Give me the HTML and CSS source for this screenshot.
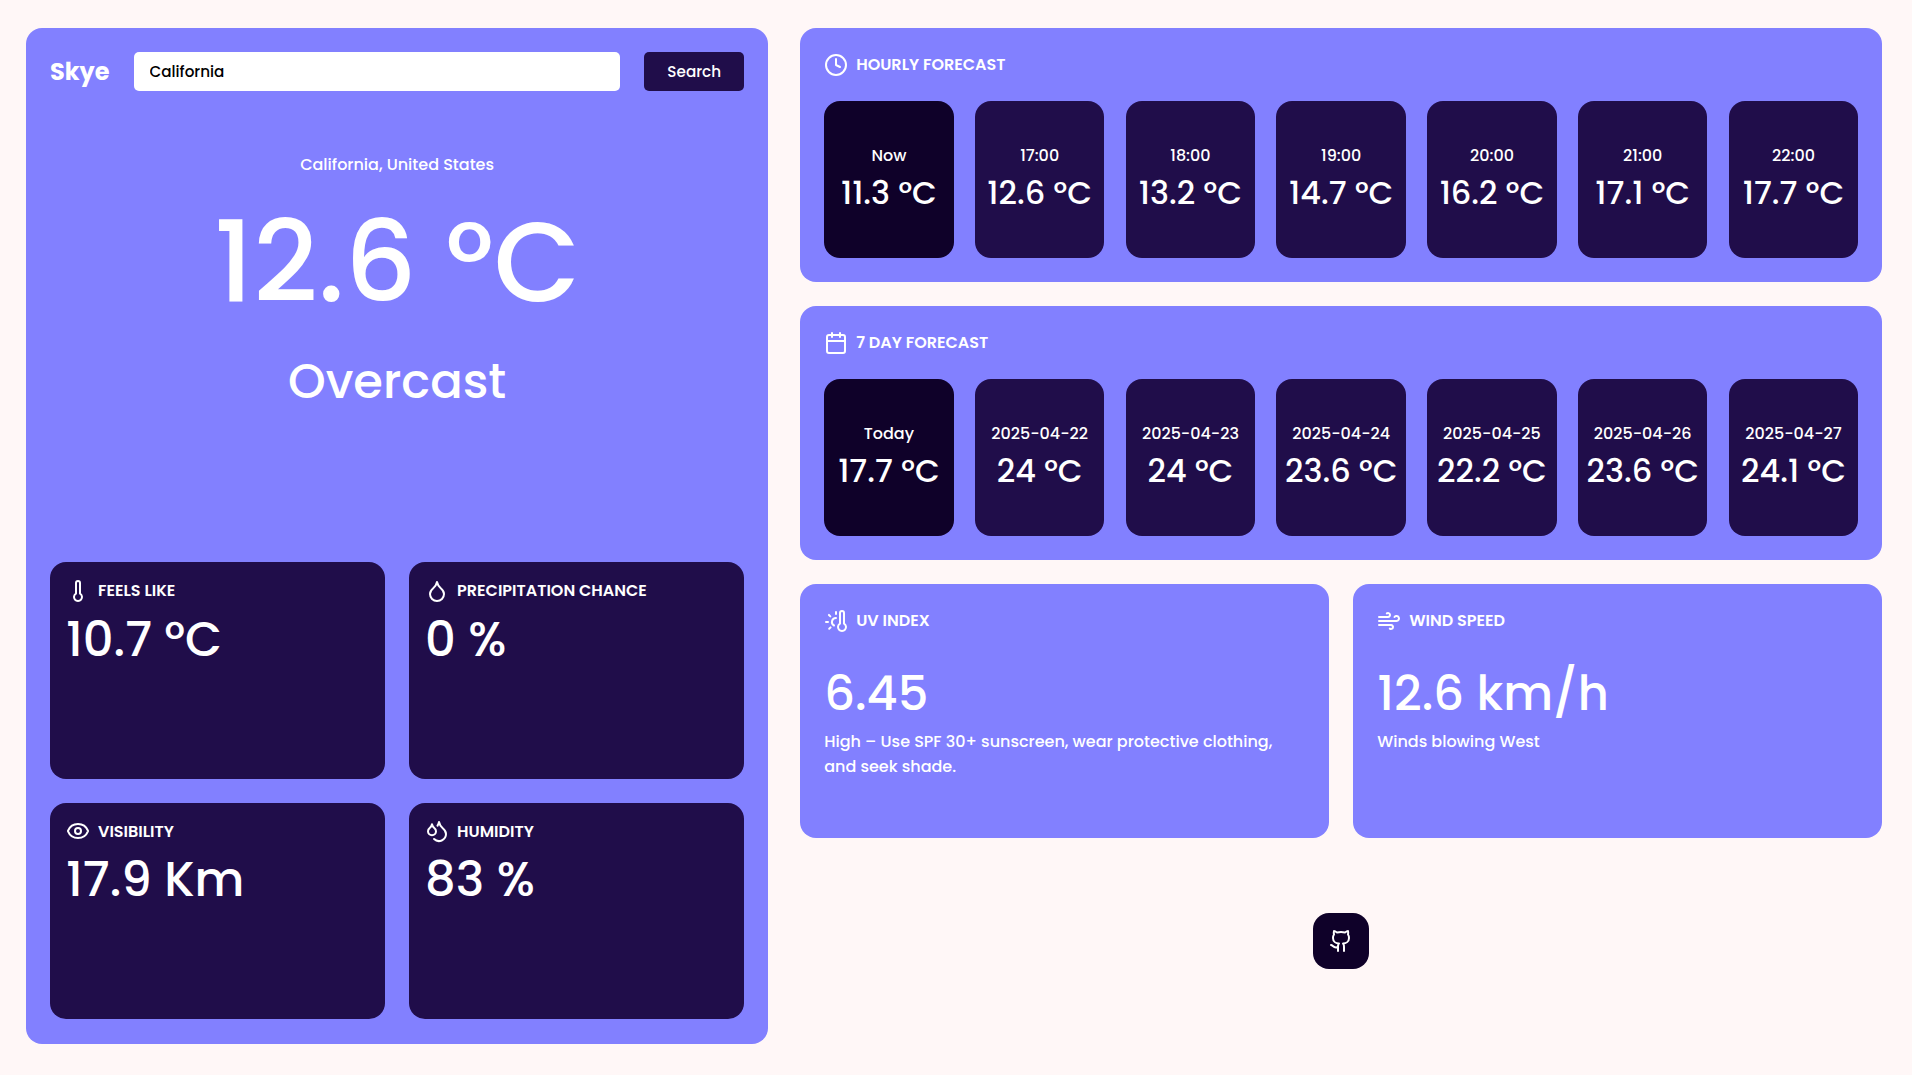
FILE: index.html
```
<!DOCTYPE html>
<html lang="en">
<head>
<meta charset="utf-8">
<title>Skye</title>
<link rel="stylesheet" href="styles.css">
</head>
<body>
<main class="app">
  <section class="current">
    <form class="search">
      <h1 class="brand">Skye</h1>
      <input class="search-input" type="text" value="California" aria-label="Location">
      <button class="search-button" type="button">Search</button>
    </form>
    <div class="summary">
      <p class="place">California, United States</p>
      <p class="now-temp">12.6 °C</p>
      <p class="condition">Overcast</p>
    </div>
    <div class="tiles">
      <article class="tile">
        <h2 class="label"><svg class="icon" viewBox="0 0 24 24"><path d="M14 4v10.54a4 4 0 1 1-4 0V4a2 2 0 0 1 4 0Z"/></svg>FEELS LIKE</h2>
        <p class="value">10.7 °C</p>
      </article>
      <article class="tile">
        <h2 class="label"><svg class="icon" viewBox="0 0 24 24"><path d="M12 22a7 7 0 0 0 7-7c0-2-1-3.9-3-5.5s-3.5-4-4-6.5c-.5 2.5-2 4.9-4 6.5C6 11.1 5 13 5 15a7 7 0 0 0 7 7z"/></svg>PRECIPITATION CHANCE</h2>
        <p class="value">0 %</p>
      </article>
      <article class="tile">
        <h2 class="label"><svg class="icon" viewBox="0 0 24 24"><path d="M2.062 12.348a1 1 0 0 1 0-.696 10.75 10.75 0 0 1 19.876 0 1 1 0 0 1 0 .696 10.75 10.75 0 0 1-19.876 0"/><circle cx="12" cy="12" r="3"/></svg>VISIBILITY</h2>
        <p class="value">17.9 Km</p>
      </article>
      <article class="tile">
        <h2 class="label"><svg class="icon" viewBox="0 0 24 24"><path d="M7 16.3c2.2 0 4-1.83 4-4.05 0-1.16-.57-2.26-1.71-3.19S7.29 6.75 7 5.3c-.29 1.45-1.14 2.84-2.29 3.76S3 11.1 3 12.25c0 2.22 1.8 4.05 4 4.05z"/><path d="M12.56 6.6A10.97 10.97 0 0 0 14 3.02c.5 2.5 2 4.9 4 6.5s3 3.5 3 5.5a6.98 6.98 0 0 1-11.91 4.97"/></svg>HUMIDITY</h2>
        <p class="value">83 %</p>
      </article>
    </div>
  </section>

  <div class="details">
    <section class="panel">
      <h2 class="label"><svg class="icon" viewBox="0 0 24 24"><circle cx="12" cy="12" r="10"/><path d="M12 6v6l4 2"/></svg>HOURLY FORECAST</h2>
      <ul class="forecast">
        <li class="slot active"><span>Now</span><strong>11.3 °C</strong></li>
        <li class="slot"><span>17:00</span><strong>12.6 °C</strong></li>
        <li class="slot"><span>18:00</span><strong>13.2 °C</strong></li>
        <li class="slot"><span>19:00</span><strong>14.7 °C</strong></li>
        <li class="slot"><span>20:00</span><strong>16.2 °C</strong></li>
        <li class="slot"><span>21:00</span><strong>17.1 °C</strong></li>
        <li class="slot"><span>22:00</span><strong>17.7 °C</strong></li>
      </ul>
    </section>
    <section class="panel">
      <h2 class="label"><svg class="icon" viewBox="0 0 24 24"><path d="M8 2v4M16 2v4M3 10h18"/><rect x="3" y="4" width="18" height="18" rx="2"/></svg>7 DAY FORECAST</h2>
      <ul class="forecast">
        <li class="slot active"><span>Today</span><strong>17.7 °C</strong></li>
        <li class="slot"><span>2025-04-22</span><strong>24 °C</strong></li>
        <li class="slot"><span>2025-04-23</span><strong>24 °C</strong></li>
        <li class="slot"><span>2025-04-24</span><strong>23.6 °C</strong></li>
        <li class="slot"><span>2025-04-25</span><strong>22.2 °C</strong></li>
        <li class="slot"><span>2025-04-26</span><strong>23.6 °C</strong></li>
        <li class="slot"><span>2025-04-27</span><strong>24.1 °C</strong></li>
      </ul>
    </section>
    <div class="pair">
      <section class="panel">
        <h2 class="label"><svg class="icon" viewBox="0 0 24 24"><path d="M12 9a4 4 0 0 0-2 7.5M12 3v2M6.6 18.4l-1.4 1.4M20 4v10.54a4 4 0 1 1-4 0V4a2 2 0 0 1 4 0ZM4 13H2M6.34 7.34 4.93 5.93"/></svg>UV INDEX</h2>
        <div class="reading">
          <p class="value">6.45</p>
          <p class="note">High – Use SPF 30+ sunscreen, wear protective clothing, and seek shade.</p>
        </div>
      </section>
      <section class="panel">
        <h2 class="label"><svg class="icon" viewBox="0 0 24 24"><path d="M12.8 19.6A2 2 0 1 0 14 16H2M17.5 8a2.5 2.5 0 1 1 2 4H2M9.8 4.4A2 2 0 1 1 11 8H2"/></svg>WIND SPEED</h2>
        <div class="reading">
          <p class="value">12.6 km/h</p>
          <p class="note">Winds blowing West</p>
        </div>
      </section>
    </div>
    <footer class="footer">
      <a class="github" href="#" aria-label="GitHub"><svg class="icon" viewBox="0 0 24 24"><path d="M15 22v-4a4.8 4.8 0 0 0-1-3.5c3 0 6-2 6-5.5.08-1.25-.27-2.48-1-3.5.28-1.15.28-2.35 0-3.5 0 0-1 0-3 1.5-2.64-.5-5.36-.5-8 0C6 2 5 2 5 2c-.3 1.15-.3 2.35 0 3.5A5.403 5.403 0 0 0 4 9c0 3.5 3 5.5 6 5.5-.39.49-.68 1.05-.85 1.65-.17.6-.22 1.23-.15 1.85v4"/><path d="M9 18c-4.51 2-5-2-7-2"/></svg></a>
    </footer>
  </div>
</main>
</body>
</html>
```
FILE: styles.css
```
* { box-sizing: border-box; margin: 0; padding: 0; }

:root {
  --bg: #fff7f7;
  --panel: #8280ff;
  --card: #200d4a;
  --card-active: #0f0129;
}

body {
  background: var(--bg);
  color: #fff;
  font: 500 16px/1.6 Poppins, Inter, sans-serif;
}

.app {
  display: grid;
  grid-template-columns: 742.2px 1fr;
  gap: 32px;
  height: 1075px;
  padding: 28px 29.8px 31px 26px;
}

.current {
  display: flex;
  flex-direction: column;
  padding: 24px 24px 25px;
  border-radius: 16px;
  background: var(--panel);
}

.search { display: flex; align-items: center; gap: 24px; height: 39px; }
.brand { font-size: 24px; font-weight: 700; line-height: 32px; }
.search-input {
  flex: 1;
  min-width: 0;
  height: 100%;
  padding: 0 16px;
  border: 0;
  border-radius: 5px;
  background: #fff;
  color: #000;
  font: inherit;
  font-size: 15.2px;
}
.search-button {
  width: 100px;
  height: 100%;
  border: 0;
  border-radius: 5px;
  background: var(--card);
  color: #fff;
  font: inherit;
  font-size: 15.2px;
  line-height: 26px;
}

.summary {
  display: flex;
  flex-direction: column;
  align-items: center;
  margin: 61px 0 auto;
}
.now-temp { margin: 28.4px 0 40px; font-size: 112px; line-height: 112px; }
.condition { font-size: 48px; line-height: 48px; }

.tiles {
  display: grid;
  grid-template-columns: 1fr 1fr;
  grid-auto-rows: 216.5px;
  gap: 24px;
}
.tile { padding: 16px; border-radius: 16px; background: var(--card); }

.label {
  display: flex;
  align-items: center;
  gap: 8px;
  font-size: 16px;
  font-weight: 600;
}
.icon {
  width: 24px;
  height: 24px;
  fill: none;
  stroke: currentColor;
  stroke-width: 2;
  stroke-linecap: round;
  stroke-linejoin: round;
}
.value { font-size: 48px; line-height: 48px; }
.tile .value { margin-top: 12px; }

.details { display: flex; flex-direction: column; gap: 24px; min-width: 0; }
.panel {
  display: flex;
  flex-direction: column;
  justify-content: space-between;
  height: 254px;
  padding: 24px;
  border-radius: 16px;
  background: var(--panel);
}
.forecast { display: flex; justify-content: space-between; list-style: none; }
.slot {
  display: flex;
  flex-direction: column;
  align-items: center;
  justify-content: center;
  gap: 6.7px;
  width: 129.4px;
  height: 157px;
  padding-bottom: 5.3px;
  border-radius: 16px;
  background: var(--card);
  white-space: nowrap;
}
.slot strong { font-size: 32px; font-weight: 500; line-height: 36px; }
.active { background: var(--card-active); }

.pair { display: grid; grid-template-columns: 1fr 1fr; gap: 24px; }
.pair .panel { justify-content: flex-start; gap: 36.4px; }
.reading { display: flex; flex-direction: column; gap: 11px; }
.note { line-height: 25px; }

.footer { flex: 1; display: flex; align-items: center; justify-content: center; padding-bottom: 24px; }
.github {
  display: grid;
  place-items: center;
  width: 56px;
  height: 56px;
  border-radius: 16px;
  background: var(--card-active);
  color: #fff;
}
```
